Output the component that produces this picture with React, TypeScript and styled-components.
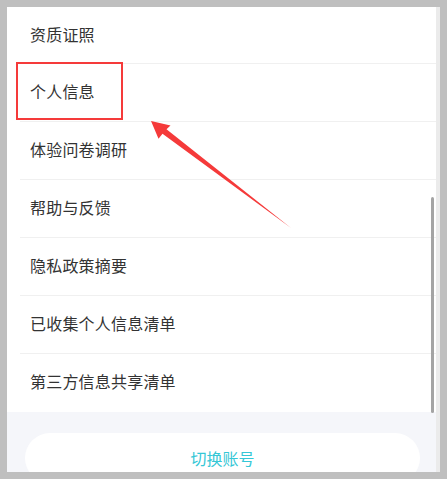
import React from "react";
import styled, { createGlobalStyle } from "styled-components";

const Global = createGlobalStyle`
  html, body { margin: 0; padding: 0; background: #bfbfbf; }
  body { font-family: "Noto Sans CJK SC", "Noto Sans", sans-serif; }
`;

const Frame = styled.div`
  width: 447px;
  height: 479px;
  box-sizing: border-box;
  padding: 7px 7px 7px 7px;
  background: #bfbfbf;
`;

const Screen = styled.div`
  position: relative;
  height: 465px;
  width: 433px;
  box-sizing: border-box;
  border-right: 4px solid #ebebeb;
  overflow: hidden;
  display: flex;
  flex-direction: column;
  background: #f5f6fa;
`;

const List = styled.div`
  background: #ffffff;
  display: flex;
  flex-direction: column;
  padding-bottom: 1px;
`;

const Row = styled.div<{ $first?: boolean }>`
  height: ${(p) => (p.$first ? 56 : 57)}px;
  box-sizing: content-box;
  margin-left: 13px;
  padding-left: 10px;
  border-top: ${(p) => (p.$first ? "none" : "1px solid #f0f0f0")};
  display: flex;
  align-items: center;
  font-size: 16px;
  line-height: 1;
  color: #333333;
  letter-spacing: 0.2px;
  padding-bottom: 0;
`;

const Label = styled.span`
  display: block;
  margin-top: -3px;
`;

const Footer = styled.div`
  padding: 21px 16px 0 18px;
`;

const Button = styled.div`
  height: 50px;
  border-radius: 25px;
  background: #ffffff;
  display: flex;
  align-items: center;
  justify-content: center;
  color: #35c7d6;
  font-size: 16px;
  line-height: 1;
`;

const Scrollbar = styled.div`
  position: absolute;
  left: 424px;
  top: 190px;
  width: 3px;
  height: 216px;
  border-radius: 1.5px;
  background: #a4a4a4;
`;

const Highlight = styled.div`
  position: absolute;
  left: 9px;
  top: 55px;
  width: 107px;
  height: 58px;
  box-sizing: border-box;
  border: 2.5px solid #f53a3a;
`;

const Arrow = styled.svg`
  position: absolute;
  left: 0;
  top: 0;
  width: 447px;
  height: 479px;
  pointer-events: none;
`;

const items = [
  "资质证照",
  "个人信息",
  "体验问卷调研",
  "帮助与反馈",
  "隐私政策摘要",
  "已收集个人信息清单",
  "第三方信息共享清单",
];

export default function App() {
  return (
    <>
      <Global />
      <Frame>
        <Screen>
          <List>
            {items.map((t, i) => (
              <Row key={t} $first={i === 0}>
                <Label>{t}</Label>
              </Row>
            ))}
          </List>
          <Footer>
            <Button>切换账号</Button>
          </Footer>
          <Scrollbar />
          <Highlight />
          <Arrow viewBox="7 7 447 479">
            <polygon
              points="151,121 170.5,125.5 166.5,129.2 291,228 162.5,133.8 158.5,138.8"
              fill="#f53a3a"
            />
          </Arrow>
        </Screen>
      </Frame>
    </>
  );
}
